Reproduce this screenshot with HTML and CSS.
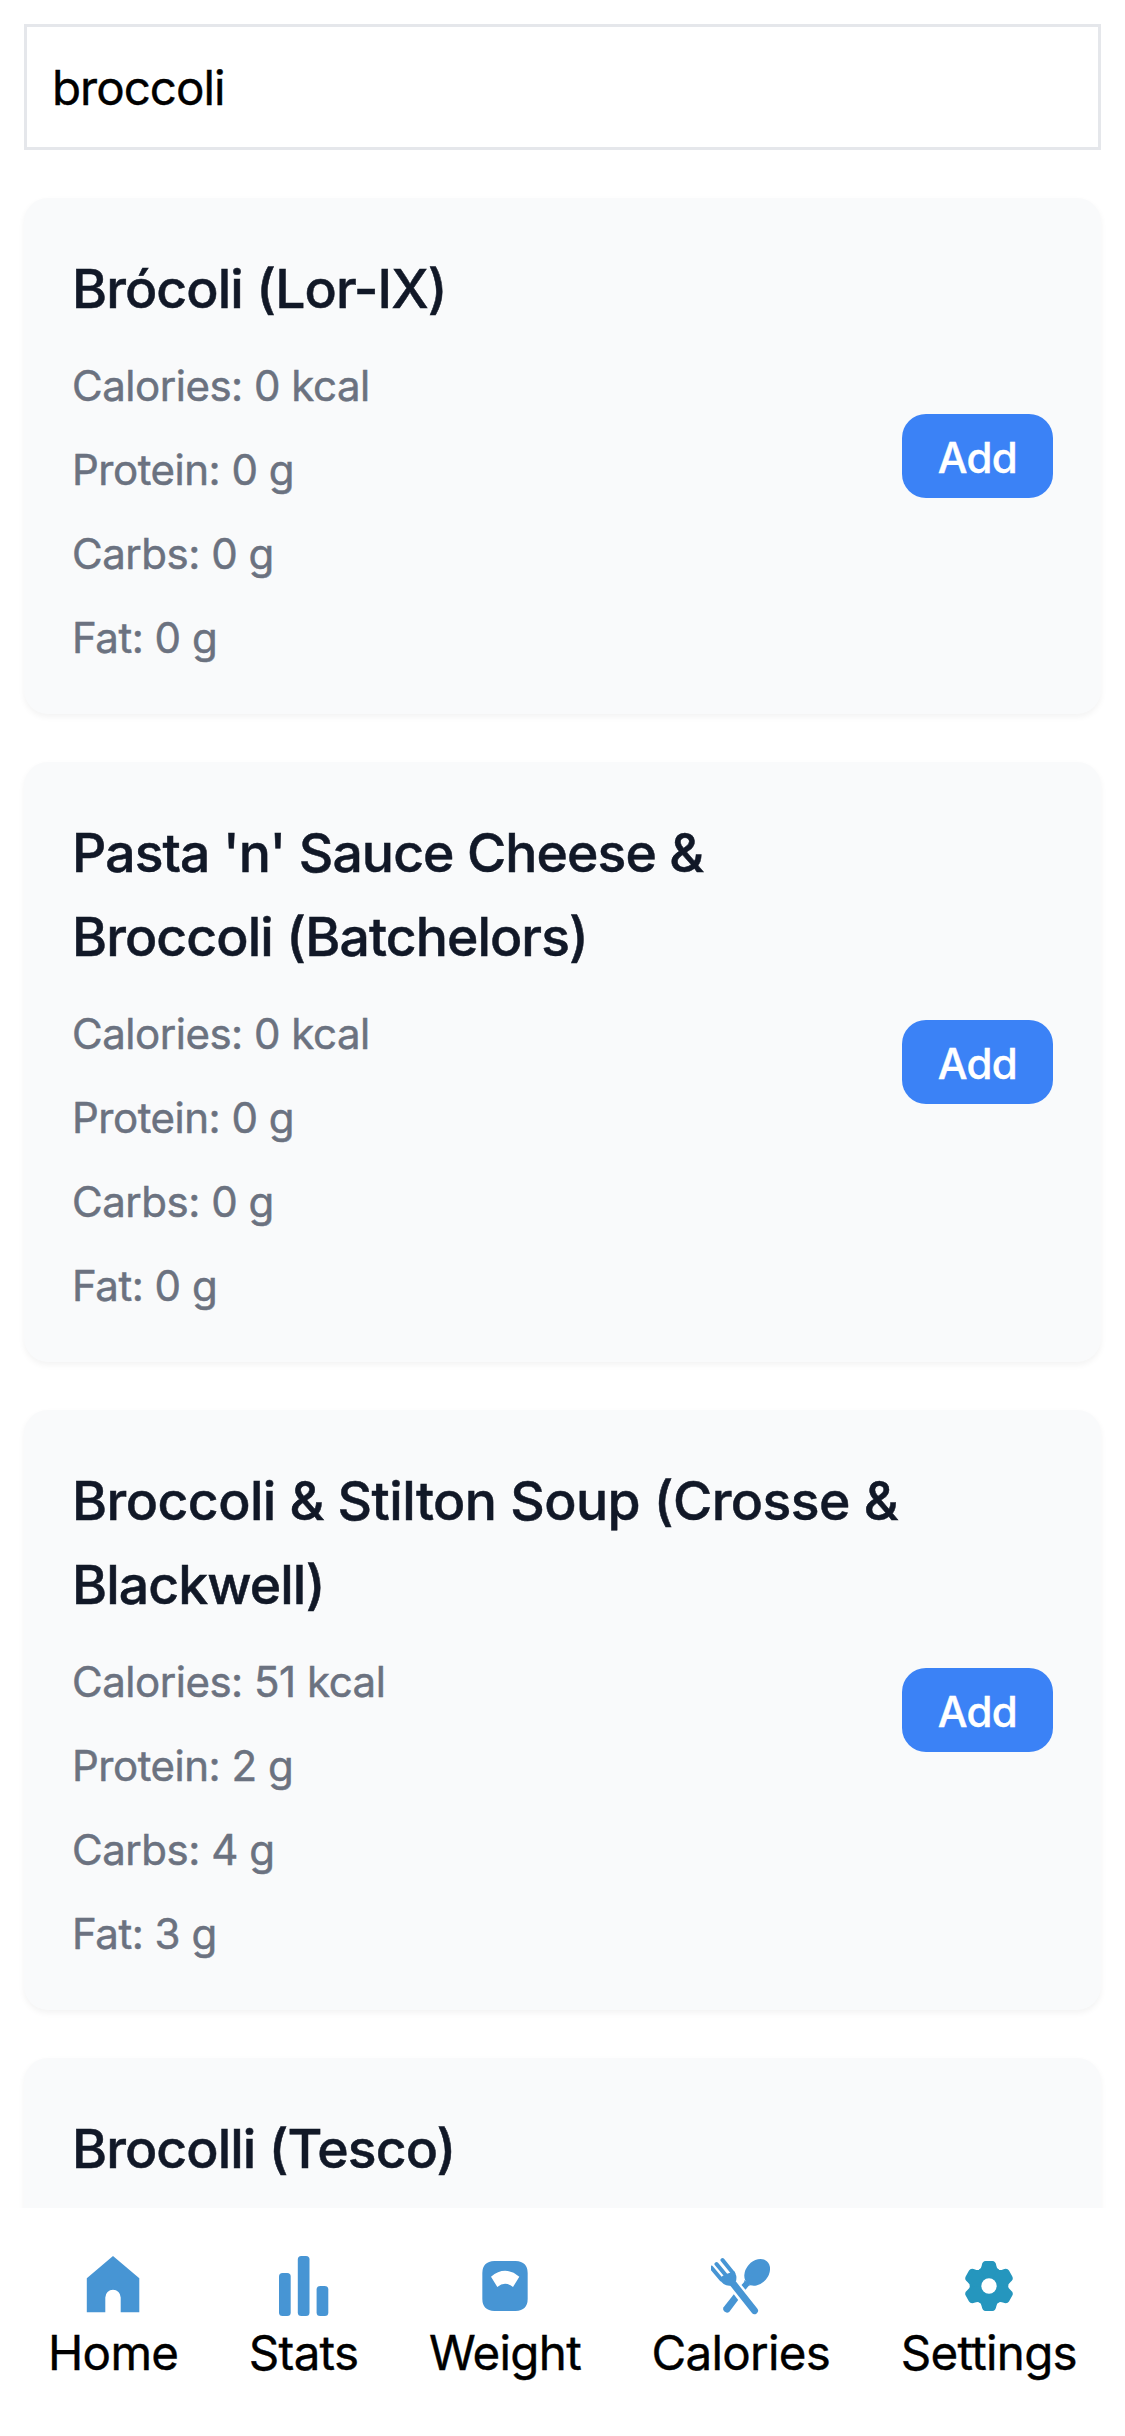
FILE: index.html
```
<!DOCTYPE html>
<html lang="en">
<head>
<meta charset="utf-8">
<title>Food search</title>
<link rel="stylesheet" href="styles.css">
</head>
<body>
<div class="app">
  <main class="content">
    <input class="search" type="text" value="broccoli" aria-label="Search foods">
    <div class="results">
      <article class="card">
        <div class="info">
          <h2 class="name">Brócoli (Lor-IX)</h2>
          <p class="fact">Calories: 0 kcal</p>
          <p class="fact">Protein: 0 g</p>
          <p class="fact">Carbs: 0 g</p>
          <p class="fact">Fat: 0 g</p>
        </div>
        <button class="add">Add</button>
      </article>
      <article class="card">
        <div class="info">
          <h2 class="name">Pasta 'n' Sauce Cheese &amp;<br>Broccoli (Batchelors)</h2>
          <p class="fact">Calories: 0 kcal</p>
          <p class="fact">Protein: 0 g</p>
          <p class="fact">Carbs: 0 g</p>
          <p class="fact">Fat: 0 g</p>
        </div>
        <button class="add">Add</button>
      </article>
      <article class="card">
        <div class="info">
          <h2 class="name"><span class="loose">Broccoli &amp; Stilton Soup (Crosse &amp;</span><br>Blackwell)</h2>
          <p class="fact">Calories: 51 kcal</p>
          <p class="fact">Protein: 2 g</p>
          <p class="fact">Carbs: 4 g</p>
          <p class="fact">Fat: 3 g</p>
        </div>
        <button class="add">Add</button>
      </article>
      <article class="card">
        <div class="info">
          <h2 class="name">Brocolli (Tesco)</h2>
        </div>
      </article>
    </div>
  </main>
  <nav class="tabs">
    <a class="tab">
      <svg class="icon" viewBox="0 0 60 60"><path d="M30 0 56.300 22.300V56.300H37.700V41.500a7.700 7.700 0 0 0-15.400 0V56.300H3.800V22.300z"/></svg>
      <span class="label">Home</span>
    </a>
    <a class="tab">
      <svg class="icon" viewBox="0 0 60 60"><rect x="5" y="17" width="11.700" height="43" rx="3.500"/><rect x="23.800" y="0" width="11.700" height="60" rx="3.500"/><rect x="42.600" y="30" width="11.700" height="30" rx="3.500"/></svg>
      <span class="label">Stats</span>
    </a>
    <a class="tab">
      <svg class="icon" viewBox="30 18 180 180"><path fill-rule="evenodd" d="M88 33H152Q188 35 188 69V147Q188 181 152 183H88Q52 181 52 147V69Q52 35 88 33ZM78 80 97 111Q120 92 144 111L163 80Q120 45 78 80Z"/></svg>
      <span class="label">Weight</span>
    </a>
    <a class="tab">
      <svg class="icon" viewBox="31.500 18 180 180">
        <g><path class="prong" d="M33 53 62 88M48 42 76 76M66 30 98 70"/><path class="handle" d="M94 96 162 182"/></g>
        <path d="M57 86Q68 109 90 107L107 92Q110 76 101 64L78 72 66 78Z"/>
        <ellipse cx="170" cy="67" rx="44" ry="34" transform="rotate(-49 170 67)"/>
        <path d="M132 90 150 106 145 107 135 119 123 105 131 96Z"/>
        <path d="M100 133 113 150 86 186A12 12 0 0 1 68 173Z"/>
      </svg>
      <span class="label">Calories</span>
    </a>
    <a class="tab">
      <svg class="icon icon-teal" viewBox="-90 -90 180 180">
        <defs><path id="tooth" d="M-30-49Q-23-52-22-61Q-20-75-10-75H10Q20-75 22-61Q23-52 30-49L0 2Z"/></defs>
        <circle r="52"/>
        <use href="#tooth"/><use href="#tooth" transform="rotate(60)"/><use href="#tooth" transform="rotate(120)"/><use href="#tooth" transform="rotate(180)"/><use href="#tooth" transform="rotate(240)"/><use href="#tooth" transform="rotate(300)"/>
        <circle r="23" fill="#fff"/>
      </svg>
      <span class="label">Settings</span>
    </a>
  </nav>
</div>
</body>
</html>
```
FILE: styles.css
```
* { box-sizing: border-box; margin: 0; }
body { background: #fff; font-family: Inter, "Liberation Sans", sans-serif; }
.app { display: flex; flex-direction: column; height: 2436px; overflow: hidden; }
.content { flex: 1; min-height: 0; overflow: hidden; padding: 24px 24px 0; }
.search { display: block; width: 100%; height: 126px; padding: 0 24px 0 25px; border: 3px solid #e5e7eb; border-radius: 0; outline: 0; font: 400 47.500px Inter, sans-serif; letter-spacing: -1px; color: #000; background: #fff; -webkit-text-stroke: .4px; }
.results { display: flex; flex-direction: column; gap: 48px; margin-top: 48px; }
.card { display: flex; align-items: center; justify-content: space-between; padding: 48px; border-radius: 24px; background: #f9fafb; box-shadow: 0 3px 6px rgba(0, 0, 0, .05); }
.name { padding-top: 1px; margin-bottom: -1px; font-size: 53.500px; font-weight: 500; letter-spacing: -.920px; line-height: 84px; color: #111827; white-space: nowrap; -webkit-text-stroke: .5px; }
.loose { letter-spacing: -.550px; }
.fact { padding-top: 2px; margin: 24px 0 -2px; font-size: 42px; letter-spacing: -.480px; line-height: 60px; color: #6b7280; white-space: nowrap; -webkit-text-stroke: .5px; }
.add { width: 151px; height: 84px; padding: 3px 0 0; border: 0; border-radius: 24px; background: #3b82f6; color: #fff; font: 500 42px Inter, sans-serif; letter-spacing: -.700px; -webkit-text-stroke: .4px; }
.tabs { display: flex; flex: none; justify-content: space-between; height: 228px; padding: 48px 48px 0; background: #fff; }
.tab { display: flex; flex-direction: column; align-items: center; }
.icon { width: 60px; height: 60px; fill: #4795d4; }
.icon-teal { fill: #2596be; }
.prong, .handle { fill: none; stroke: #4795d4; stroke-linecap: round; }
.prong { stroke-width: 12px; }
.handle { stroke-width: 21px; }
.label { padding-top: 1px; font-size: 47.500px; letter-spacing: -.700px; line-height: 72px; color: #000; -webkit-text-stroke: .4px; }
```
